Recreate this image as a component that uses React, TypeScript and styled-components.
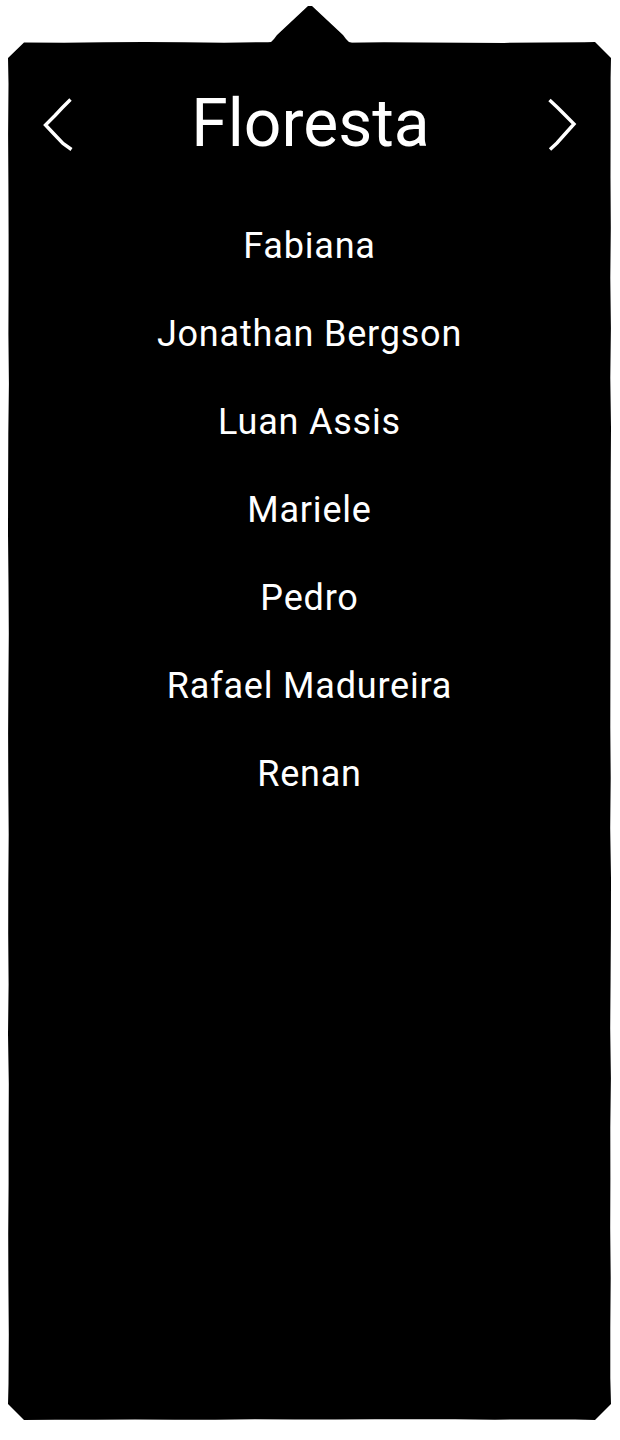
import React from "react";
import styled, { createGlobalStyle } from "styled-components";

const GlobalStyle = createGlobalStyle`
  html, body { margin: 0; padding: 0; background: #ffffff; }
  body { font-family: Roboto, "Noto Sans", "DejaVu Sans", sans-serif; }
`;

const W = 603;
const H = 1378;
const C = 16;

function roughPolygon(): string {
  let seed = 11;
  const rnd = () => {
    seed = (seed * 9301 + 49297) % 233280;
    return seed / 233280;
  };
  const d = () => (rnd() * 0.9).toFixed(1);
  const pts: string[] = [];
  for (let x = C; x < W - C; x += 40) pts.push(`${x}px ${d()}px`);
  pts.push(`${W - C}px 0px`);
  pts.push(`${W}px ${C}px`);
  for (let y = C + 20; y < H - C; y += 50) pts.push(`${W - +d()}px ${y}px`);
  pts.push(`${W}px ${H - C}px`);
  pts.push(`${W - C}px ${H}px`);
  for (let x = W - C - 20; x > C; x -= 40) pts.push(`${x}px ${H - +d()}px`);
  pts.push(`${C}px ${H}px`);
  pts.push(`0px ${H - C}px`);
  for (let y = H - C - 20; y > C; y -= 50) pts.push(`${d()}px ${y}px`);
  pts.push(`0px ${C}px`);
  return `polygon(${pts.join(", ")})`;
}

const PANEL_CLIP = roughPolygon();

const Wrapper = styled.div`
  position: relative;
  width: ${W}px;
  margin: 42px 0 20px 8px;
`;

const Notch = styled.span`
  position: absolute;
  top: -36px;
  left: 260px;
  width: 84px;
  height: 38px;
  background: #000;
  clip-path: polygon(
    0px 37px,
    3px 36px,
    6px 33px,
    9px 29px,
    40px 0px,
    44px 0px,
    75px 29px,
    78px 33px,
    81px 36px,
    84px 37px,
    84px 38px,
    0px 38px
  );
`;

const Panel = styled.section`
  box-sizing: border-box;
  height: ${H}px;
  background: #000;
  color: #fff;
  clip-path: ${PANEL_CLIP};
  padding-top: 42px;
`;

const Header = styled.header`
  display: grid;
  grid-template-columns: 1fr auto 1fr;
  align-items: center;
  padding: 0 32px 0 34px;
  height: 80px;
`;

const Title = styled.h1`
  margin: 0;
  font-size: 66px;
  font-weight: 400;
  line-height: 80px;
  text-align: center;
`;

const NavButton = styled.button<{ $side: "left" | "right" }>`
  justify-self: ${(p) => (p.$side === "left" ? "start" : "end")};
  background: none;
  border: 0;
  padding: 0;
  margin: 0;
  width: 34px;
  height: 56px;
  display: block;
  cursor: pointer;
  svg {
    display: block;
  }
`;

const List = styled.ul`
  list-style: none;
  margin: 38px 0 0;
  padding: 0;
`;

const Name = styled.li`
  font-size: 36px;
  line-height: 88px;
  letter-spacing: 0.8px;
  text-align: center;
  font-weight: 400;
`;

const names = [
  "Fabiana",
  "Jonathan Bergson",
  "Luan Assis",
  "Mariele",
  "Pedro",
  "Rafael Madureira",
  "Renan",
];

const ChevronLeft = () => (
  <svg width="34" height="56" viewBox="0 0 34 56">
    <path
      d="M28.5 3.5 L20 12 L13 19.5 L3.5 29 L12 38 L21 47.5 L29.5 53.5"
      fill="none"
      stroke="#fff"
      strokeWidth="3.4"
      strokeLinejoin="miter"
    />
  </svg>
);

const ChevronRight = () => (
  <svg width="34" height="56" viewBox="0 0 34 56">
    <path
      d="M4.5 4 L13 12 L21 20 L29 28 L20 38 L12 47 L5 53.5"
      fill="none"
      stroke="#fff"
      strokeWidth="3.4"
      strokeLinejoin="miter"
    />
  </svg>
);

export default function App() {
  return (
    <>
      <GlobalStyle />
      <Wrapper>
        <Notch />
        <Panel>
          <Header>
            <NavButton $side="left" aria-label="Anterior">
              <ChevronLeft />
            </NavButton>
            <Title>Floresta</Title>
            <NavButton $side="right" aria-label="Próximo">
              <ChevronRight />
            </NavButton>
          </Header>
          <List>
            {names.map((n) => (
              <Name key={n}>{n}</Name>
            ))}
          </List>
        </Panel>
      </Wrapper>
    </>
  );
}
